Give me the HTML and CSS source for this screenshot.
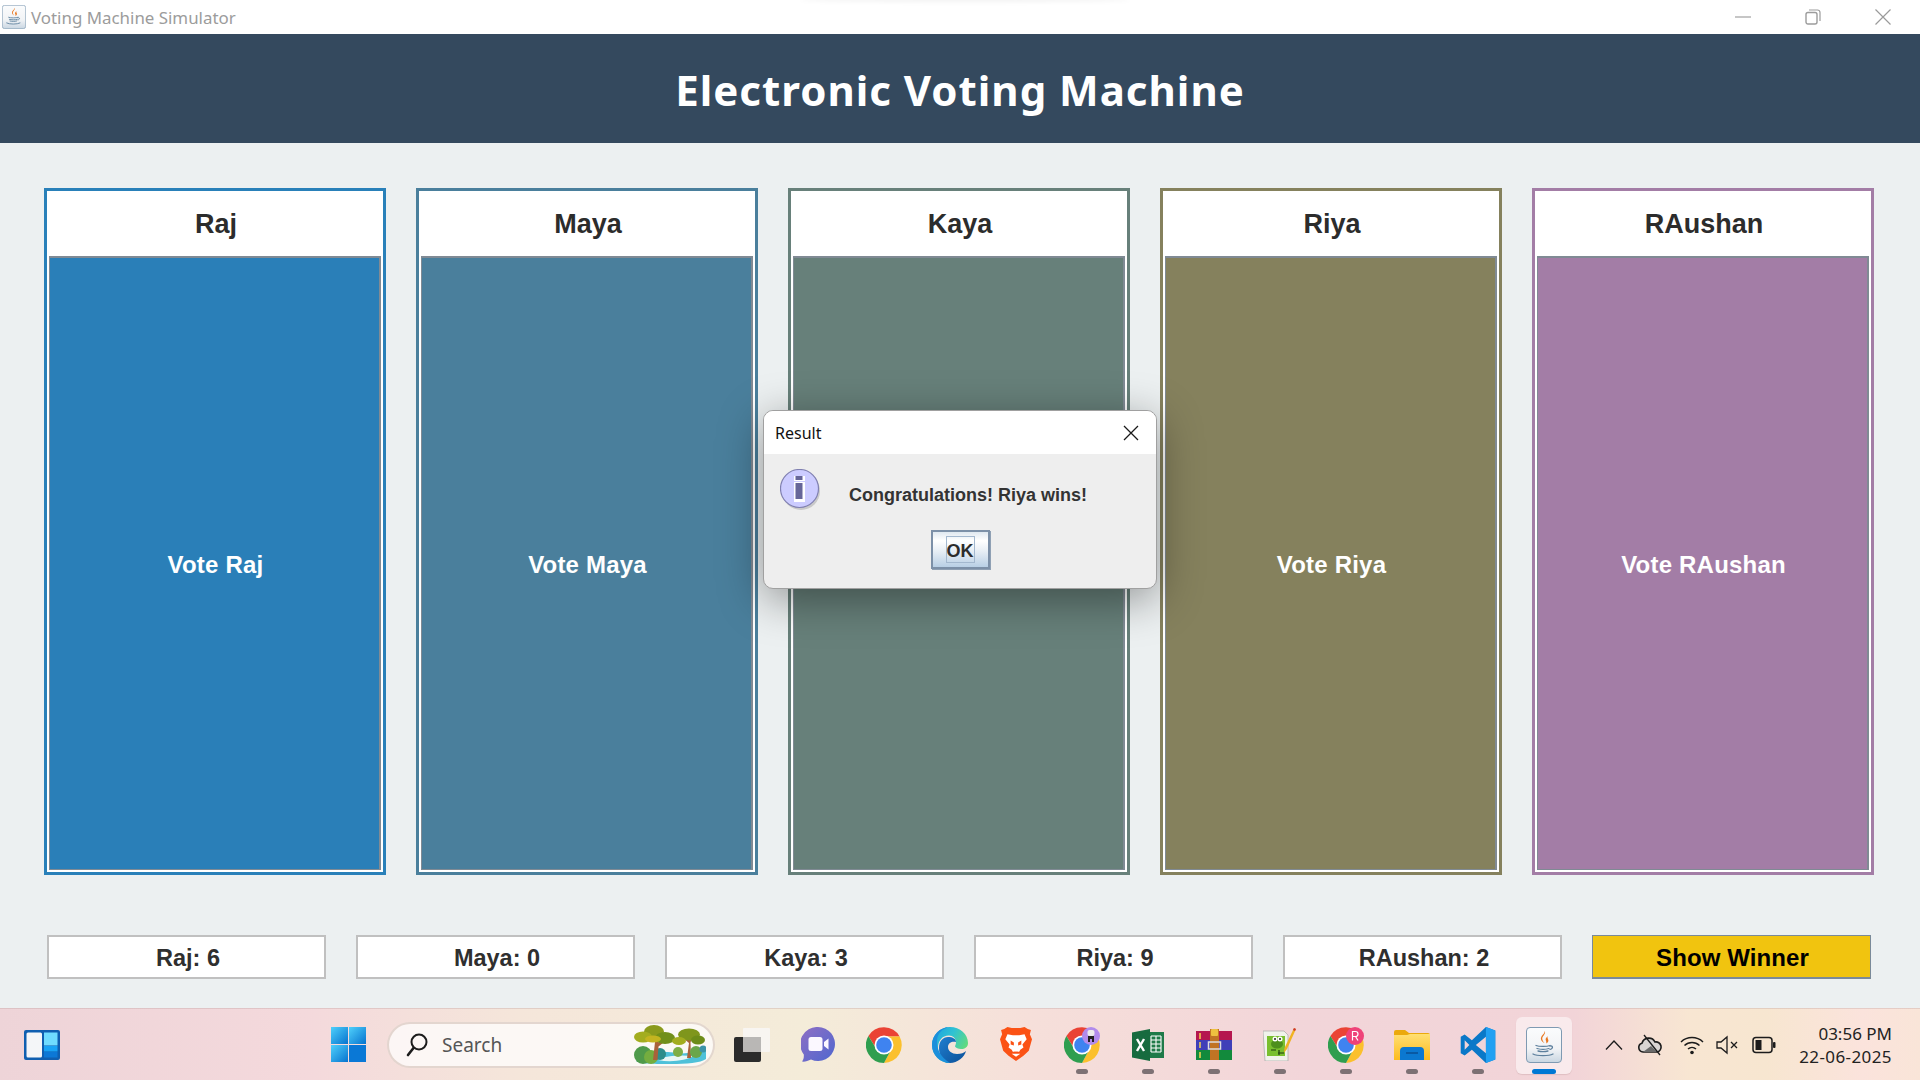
FILE: index.html
```html
<!DOCTYPE html>
<html lang="en">
<head>
<meta charset="utf-8">
<title>Voting Machine Simulator</title>
<link rel="stylesheet" href="styles.css">
</head>
<body>
<svg class="defs" aria-hidden="true">
  <defs>
    <linearGradient id="javaBg" x1="0" y1="0" x2="0" y2="1"><stop offset="0" stop-color="#fbfcfd"/><stop offset=".6" stop-color="#f2f4f6"/><stop offset="1" stop-color="#c9d6e2"/></linearGradient>
    <linearGradient id="edgeA" x1="0" y1="0" x2="1" y2=".6"><stop offset="0" stop-color="#1b9de2"/><stop offset=".5" stop-color="#2fc2d3"/><stop offset="1" stop-color="#6ade71"/></linearGradient>
    <linearGradient id="edgeB" x1="0" y1="0" x2="1" y2="1"><stop offset="0" stop-color="#1f7fd0"/><stop offset="1" stop-color="#0c4f97"/></linearGradient>
    <linearGradient id="startA" x1="0" y1="0" x2="1" y2="1"><stop offset="0" stop-color="#4fd0fb"/><stop offset="1" stop-color="#0673cf"/></linearGradient>
    <linearGradient id="meetA" x1="0" y1="0" x2="1" y2="1"><stop offset="0" stop-color="#8f6fc4"/><stop offset="1" stop-color="#4f67cf"/></linearGradient>
    <linearGradient id="folderA" x1="0" y1="0" x2="0" y2="1"><stop offset="0" stop-color="#ffdf72"/><stop offset="1" stop-color="#fdbb1d"/></linearGradient>
    <symbol id="java" viewBox="0 0 36 36">
      <rect x=".5" y=".5" width="35" height="35" rx="3.5" fill="url(#javaBg)" stroke="#7f9ab2"/>
      <path d="M18.500 4c2.500 3-3.500 5-2 9 .5 1.500 1.500 2.500 2 3-3-1.500-4.500-4-3-6.500C16.500 7.500 19 6.500 18.500 4z" fill="#e8761f"/>
      <path d="M22 9c-2 1.500-3 3-2 5 .4 1 .6 1.500 0 2.500 2-1 3-2.500 2-4.500-.5-1-.8-1.800 0-3z" fill="#e8761f"/>
      <path d="M10 18.500c3 1.200 11 1.200 14 0M11 21.500c3 1 9 1 12 0M12 24c3 .8 7 .8 10 0M24 19c3-.6 3.500 2.500 0 3.500M7 27c4 2.200 16 2.200 20 0" fill="none" stroke="#5c7f9c" stroke-width="1.300" stroke-linecap="round"/>
    </symbol>
    <symbol id="chrome" viewBox="0 0 36 36">
      <path d="M18 9.500H33.600A18 18 0 0 0 2.400 9L10.600 22.300A8.500 8.500 0 0 1 18 9.500Z" fill="#ea4335"/>
      <path d="M18 9.500H33.600A18 18 0 0 1 18 36L25.400 22.300A8.500 8.500 0 0 0 18 9.500Z" fill="#fbc02d"/>
      <path d="M10.600 22.300L2.400 9A18 18 0 0 0 18 36L25.400 22.300A8.500 8.500 0 0 1 10.600 22.300Z" fill="#2f9e4f"/>
      <circle cx="18" cy="18" r="9.500" fill="#fff"/>
      <circle cx="18" cy="18" r="7.800" fill="#3f83f0"/>
    </symbol>
  </defs>
</svg>

<div class="titlebar">
  <svg class="title-icon" viewBox="0 0 36 36"><use href="#java"/></svg>
  <span class="title-text">Voting Machine Simulator</span>
  <div class="window-controls">
    <span class="wc"><svg width="16" height="16" viewBox="0 0 16 16"><path d="M0 8h16" stroke="#a0a0a0" stroke-width="1.200"/></svg></span>
    <span class="wc"><svg width="16" height="16" viewBox="0 0 16 16"><rect x="1" y="3.500" width="11" height="11.500" rx="2" fill="none" stroke="#9c9c9c" stroke-width="1.400"/><path d="M4 1h8.500A2.500 2.500 0 0 1 15 3.500V12" fill="none" stroke="#9c9c9c" stroke-width="1.200"/></svg></span>
    <span class="wc"><svg width="16" height="16" viewBox="0 0 16 16"><path d="M.5.500l15 15M15.500.500l-15 15" stroke="#9a9a9a" stroke-width="1.200"/></svg></span>
  </div>
</div>

<header class="app-header"><h1>Electronic Voting Machine</h1></header>

<main class="board">
  <section class="cards">
    <article class="card c-raj"><h2>Raj</h2><button class="vote">Vote Raj</button></article>
    <article class="card c-maya"><h2>Maya</h2><button class="vote">Vote Maya</button></article>
    <article class="card c-kaya"><h2>Kaya</h2><button class="vote" aria-label="Vote Kaya"></button></article>
    <article class="card c-riya"><h2>Riya</h2><button class="vote">Vote Riya</button></article>
    <article class="card c-raushan"><h2>RAushan</h2><button class="vote">Vote RAushan</button></article>
  </section>
  <section class="stats">
    <div class="stat">Raj: 6</div>
    <div class="stat">Maya: 0</div>
    <div class="stat">Kaya: 3</div>
    <div class="stat">Riya: 9</div>
    <div class="stat">RAushan: 2</div>
    <button class="winner">Show Winner</button>
  </section>
</main>

<footer class="taskbar">
  <svg class="widgets" width="36" height="30" viewBox="0 0 36 30">
    <rect width="36" height="30" rx="2" fill="#0f5fb0"/>
    <rect x="2.500" y="2.500" width="15.500" height="25" rx="1.500" fill="#f4f6f8"/>
    <rect x="20" y="2.500" width="13.500" height="13" fill="#6fdcff"/>
    <rect x="20" y="16" width="13.500" height="5.500" fill="#18a3f5"/>
    <rect x="20" y="22" width="13.500" height="5.500" fill="#0c78d6"/>
  </svg>
  <div class="slot start-slot">
    <svg width="35" height="35" viewBox="0 0 35 35">
      <rect width="17" height="17" fill="url(#startA)"/><rect x="18" width="17" height="17" fill="url(#startA)"/>
      <rect y="18" width="17" height="17" fill="url(#startA)"/><rect x="18" y="18" width="17" height="17" fill="#0a78d6"/>
    </svg>
  </div>
  <div class="search">
    <svg width="22" height="24" viewBox="0 0 22 24"><circle cx="13" cy="9" r="7.500" fill="none" stroke="#1c1c1c" stroke-width="2"/><path d="M7.500 15L2 22" stroke="#1c1c1c" stroke-width="2.600" stroke-linecap="round"/></svg>
    <span class="search-label">Search</span>
    <svg class="search-art" width="72" height="40" viewBox="0 0 72 40">
      <path d="M2 36c12-10 30-10 40-8s20-2 30-4v10c-5 4-20 5-35 5S6 39 2 36z" fill="#4fc1d9"/>
      <path d="M24 35c8-5 24-5 36-4-8 4-22 7-36 4z" fill="#e9f7f5"/>
      <circle cx="9" cy="30" r="9" fill="#4f9a4a"/><circle cx="17" cy="32" r="7" fill="#74ad3f"/><circle cx="26" cy="29" r="6" fill="#2d8d8a"/>
      <path d="M19 35l2-18-8-7 2-1.500 7 6 3-8 2.500 1-3 10 9-6 1 2-10 8-1 13.500z" fill="#a9613a"/>
      <ellipse cx="20" cy="6.500" rx="10" ry="6.500" fill="#8a9a1c"/><ellipse cx="9" cy="12" rx="9" ry="5.500" fill="#a3ad1f"/><ellipse cx="31" cy="13" rx="10" ry="6" fill="#718f1a"/><ellipse cx="19" cy="14" rx="8" ry="3.500" fill="#c3b420"/>
      <path d="M53 33l2-15-6-5 1.500-1 4.500 3 3-5 2 1-3.500 6 .5 16z" fill="#a9613a"/>
      <ellipse cx="55" cy="9.500" rx="11" ry="6" fill="#7f961c"/><ellipse cx="45" cy="16" rx="7" ry="4" fill="#a3ad1f"/><ellipse cx="64" cy="15" rx="7" ry="4.500" fill="#6d8c19"/>
      <circle cx="44" cy="27" r="5" fill="#7dae45"/><circle cx="62" cy="27" r="6" fill="#6aa64a"/><circle cx="69" cy="24" r="3.500" fill="#3b93a8"/>
    </svg>
  </div>
  <div class="slots">
    <div class="slot">
      <svg width="36" height="34" viewBox="0 0 36 34"><rect y="9" width="27" height="25" rx="2" fill="#2b2b2b"/><rect x="9" width="27" height="24" rx="1" fill="#f7f5f3" fill-opacity=".92"/><rect x="9" y="9" width="18" height="15" fill="#b9b7b5"/></svg>
    </div>
    <div class="slot">
      <svg width="34" height="36" viewBox="0 0 34 36"><path d="M17 0a17 17 0 1 1-7 32.500C7 34 3.500 35 1 34.500c1.500-2 2-4 1.800-7A17 17 0 0 1 17 0z" fill="url(#meetA)"/><rect x="7.500" y="10" width="14" height="14" rx="2.500" fill="#fbf8ff"/><path d="M23 15l4.500-3.500v11L23 19z" fill="#fbf8ff"/></svg>
    </div>
    <div class="slot"><svg width="36" height="36"><use href="#chrome"/></svg></div>
    <div class="slot">
      <svg width="36" height="36" viewBox="0 0 36 36">
        <path d="M18 0c10 0 18 7 18 16 0 4-3 6-7 6-3 0-5-1-6-2.500 0-1 1-2 1-4 0-4-3-7-7-7C10 8.500 6 14 6 21c0 7 5 13 12 15C8 36 0 28 0 18 0 8 8 0 18 0z" fill="url(#edgeA)"/>
        <path d="M7 21C7 14 11 10 16 10c5 0 8 2 8 5-3-1-8 0-8 5 0 4 4 7 9 7 4 0 7-1 9-3-1.500 6-8.500 12-16 12C10 36 7 28 7 21z" fill="url(#edgeB)"/>
        <path d="M0 18C0 8 8 0 18 0 10 1 5 7 5 14c-.5 7 3 16 13 22C8 36 0 28 0 18z" fill="#1c8fdb"/>
      </svg>
    </div>
    <div class="slot">
      <svg width="32" height="37" viewBox="0 0 30 36" preserveAspectRatio="none">
        <path d="M7 1l4 1h8l4-1 3 2 3 1-1 4 2 5-3 11-5 5-7 5-7-5-5-5L0 13l2-5-1-4 3-1z" fill="#fb5215"/>
        <path d="M7 8l5 1h6l5-1 2 5-4 5 1 3-3 2-1 2h-6l-1-2-3-2 1-3-4-5z" fill="#fff"/>
        <path d="M10 14l3 2v3l-3-1zM20 14l-3 2v3l3-1zM13 25h4l-2 3z" fill="#fb5215"/>
        <path d="M11 27h8l-4 3z" fill="#fff"/>
      </svg>
    </div>
    <div class="slot has-dot">
      <svg width="36" height="36"><use href="#chrome"/></svg>
      <svg class="badge" width="18" height="18" viewBox="0 0 18 18"><circle cx="9" cy="9" r="9" fill="#b18bec"/><rect x="5.500" y="3" width="7" height="6" rx="2" fill="#ececec"/><path d="M6 9h6v6h-2v-3H8v3H6z" fill="#222"/></svg>
    </div>
    <div class="slot has-dot">
      <svg width="32" height="32" viewBox="0 0 32 32">
        <rect x="12" y="3" width="20" height="26" fill="#1f7a49"/>
        <path d="M19 7h10M19 11h10M19 15h10M19 19h10M19 23h10M19 7v16M24 7v16M29 7v16" stroke="#fff" stroke-width="1.100"/>
        <path d="M0 3.500L18 0v32L0 28.500z" fill="#176b3f"/>
        <path d="M5 10l7 12M12 10L5 22" stroke="#fff" stroke-width="2.400"/>
      </svg>
    </div>
    <div class="slot has-dot">
      <svg width="36" height="32" viewBox="0 0 36 32">
        <rect y="2" width="36" height="9" fill="#b5174f"/><rect y="11" width="36" height="10" fill="#3f3fb8"/><rect y="21" width="36" height="10" fill="#128a3c"/>
        <path d="M4 4v6M4 13v6M4 23v6" stroke="#f5d44d" stroke-width="1.500"/>
        <rect x="14" y="0" width="9" height="31" fill="#c17424"/>
        <rect x="15" y="0" width="7" height="7" rx="1" fill="#eec13f"/>
        <rect x="12.500" y="13" width="12" height="7" fill="none" stroke="#ddd" stroke-width="1.500"/>
      </svg>
    </div>
    <div class="slot has-dot">
      <svg width="34" height="33" viewBox="0 0 34 33">
        <path d="M0 3h21l4 4v26H2z" fill="#f0f2ea" stroke="#a6a6a6" stroke-width=".7"/>
        <rect x="4" y="8" width="18" height="20" fill="#79bf2e"/>
        <ellipse cx="14" cy="16" rx="6" ry="4.500" fill="#4d8f1c"/><circle cx="12" cy="11" r="2.500" fill="#fff"/><circle cx="17" cy="11" r="2.500" fill="#fff"/><circle cx="12" cy="11" r="1" fill="#222"/><circle cx="17" cy="11" r="1" fill="#222"/>
        <path d="M8 22h5M15 25h6M16 22v5" stroke="#1f3f0f" stroke-width="1.200"/>
        <path d="M33 1L24 21l-3 4 .5-5L31 0z" fill="#f0b323"/><path d="M33 1l-2-1-1 2 2 1z" fill="#c33"/>
      </svg>
    </div>
    <div class="slot has-dot">
      <svg width="36" height="36"><use href="#chrome"/></svg>
      <svg class="badge" width="18" height="18" viewBox="0 0 18 18"><circle cx="9" cy="9" r="9" fill="#ef4279"/><path d="M6.500 13.500v-9h3a2.500 2.500 0 0 1 0 5h-3M9.500 9.500l2.500 4" fill="none" stroke="#fff" stroke-width="1.200"/></svg>
    </div>
    <div class="slot has-dot">
      <svg width="36" height="30" viewBox="0 0 36 30">
        <path d="M0 2a2 2 0 0 1 2-2h9l4 3h19a2 2 0 0 1 2 2v5H0z" fill="#eba90b"/>
        <path d="M0 5h13l3-1h20v26H0z" fill="url(#folderA)"/>
        <path d="M6 30V21a4 4 0 0 1 4-4h16a4 4 0 0 1 4 4v9z" fill="#0b78d0"/>
        <path d="M12 23h12" stroke="#0a4f94" stroke-width="1.500"/>
      </svg>
    </div>
    <div class="slot has-dot">
      <svg width="36" height="36" viewBox="0 0 100 100">
        <path fill-rule="evenodd" d="M72 0L33 37 13 21 2 27v46l11 6 20-16 39 37 26-10V10zM72 27L44 50l28 23zM13 37v26l13-13z" fill="#0a78c8"/>
        <path fill-rule="evenodd" d="M72 0l26 10v80l-26 10V73l0-46z" fill="#22a0f2"/>
      </svg>
    </div>
    <div class="slot has-dot active"><svg width="36" height="36"><use href="#java"/></svg></div>
  </div>
  <div class="tray">
    <span class="tray-item"><svg width="18" height="10" viewBox="0 0 18 10"><path d="M1 9.500L9 1l8 8.500" fill="none" stroke="#1c1c1c" stroke-width="1.300"/></svg></span>
    <span class="tray-item"><svg width="26" height="22" viewBox="0 0 26 22"><path d="M6 18a4.500 4.500 0 0 1-1-8.800A7 7 0 0 1 18 8a5 5 0 0 1 2 10z" fill="#d9d4d2" stroke="#1c1c1c" stroke-width="1.600"/><path d="M6 18l8-6 6 6z" fill="#6a6a6a"/><path d="M7 1l16 20" stroke="#1c1c1c" stroke-width="1.300"/></svg></span>
    <span class="tray-item tray-wifi"><svg width="24" height="20" viewBox="0 0 24 20"><path d="M1 7a16 16 0 0 1 22 0M4.500 10.500a11 11 0 0 1 15 0M8 14a6 6 0 0 1 8 0" fill="none" stroke="#1c1c1c" stroke-width="1.500"/><circle cx="12" cy="17.500" r="1.800" fill="#1c1c1c"/></svg></span>
    <span class="tray-item"><svg width="24" height="20" viewBox="0 0 24 20"><path d="M1 7h4l6-5v16l-6-5H1z" fill="none" stroke="#1c1c1c" stroke-width="1.300"/><path d="M15 7l6 6M21 7l-6 6" stroke="#1c1c1c" stroke-width="1.300"/></svg></span>
    <span class="tray-item"><svg width="24" height="18" viewBox="0 0 24 18"><rect x="1" y="1.500" width="19" height="15" rx="3" fill="none" stroke="#1c1c1c" stroke-width="1.500"/><rect x="3.500" y="4" width="6" height="10" fill="#1c1c1c"/><rect x="21" y="6" width="2.500" height="6" rx="1" fill="#1c1c1c"/></svg></span>
  </div>
  <div class="clock"><span>03:56 PM</span><span class="clock-date">22-06-2025</span></div>
</footer>

<div class="dialog">
  <div class="dialog-title">
    <span>Result</span>
    <svg width="16" height="16" viewBox="0 0 16 16"><path d="M1 1l14 14M15 1L1 15" stroke="#1a1a1a" stroke-width="1.300"/></svg>
  </div>
  <div class="dialog-body">
    <svg class="info" width="44" height="46" viewBox="0 0 44 46">
      <circle cx="21" cy="22" r="19" fill="#b9b9b9" opacity=".7"/>
      <circle cx="19.500" cy="19.500" r="19" fill="#ccccff" stroke="#8080b0" stroke-width="1.200"/>
      <rect x="14" y="7" width="11" height="5" fill="#fff"/><rect x="15.500" y="7" width="7" height="4" fill="#666699"/>
      <rect x="14" y="13" width="11" height="20" fill="#fff"/><rect x="15.500" y="14" width="7" height="16" fill="#666699"/>
    </svg>
    <p class="message">Congratulations! Riya wins!</p>
  </div>
  <div class="dialog-actions"><button class="ok"><span class="ok-focus">OK</span></button></div>
</div>
</body>
</html>
```

FILE: styles.css
```css
* { box-sizing: border-box; }
html, body { margin: 0; padding: 0; }
body {
  width: 1920px;
  height: 1080px;
  overflow: hidden;
  display: flex;
  flex-direction: column;
  position: relative;
  font-family: "Liberation Sans", Arial, sans-serif;
  background: #ecf0f1;
}
button { font-family: inherit; cursor: pointer; margin: 0; padding: 0; }
.defs { position: absolute; width: 0; height: 0; }

/* title bar */
.titlebar {
  height: 34px;
  flex: none;
  display: flex;
  align-items: center;
  background: #fff;
  padding: 0 2px;
  position: relative;
}
.titlebar::after {
  content: "";
  position: absolute;
  left: 800px;
  top: -3px;
  width: 330px;
  height: 5px;
  border-radius: 50%;
  background: rgba(0, 0, 0, .05);
  filter: blur(2px);
}
.title-icon { width: 24px; height: 24px; flex: none; }
.title-text {
  margin-left: 5px;
  font: 16.900px "Noto Sans", sans-serif;
  color: #9c9c9c;
}
.window-controls { margin-left: auto; display: flex; }
.wc { width: 70px; display: flex; justify-content: center; }

/* header */
.app-header {
  height: 109px;
  flex: none;
  background: #34495e;
  display: flex;
  align-items: center;
  justify-content: center;
}
.app-header h1 {
  margin: 0;
  font: 700 42px "Noto Sans", sans-serif;
  letter-spacing: 1px;
  color: #fff;
  position: relative;
  top: 1px;
}

/* board */
.board { flex: 1; padding-top: 45px; }
.cards {
  display: grid;
  grid-template-columns: repeat(5, 342px);
  gap: 30px;
  padding-left: 44px;
}
.card {
  height: 687px;
  display: flex;
  flex-direction: column;
  background: #fff;
  border: 3px solid;
  padding: 0 2px 2px;
}
.card h2 {
  margin: 0;
  height: 65px;
  flex: none;
  display: flex;
  align-items: center;
  justify-content: center;
  padding: 2px 0 0 2px;
  font-size: 27px;
  font-weight: 700;
  color: #2c2c2c;
}
.vote {
  flex: 1;
  color: #fff;
  font-size: 24px;
  font-weight: 700;
  letter-spacing: .2px;
  padding: 2px 0 0 2px;
  border-style: solid;
  border-color: #808a94;
  border-width: 2px 2px 1px 1px;
}
.c-raj { border-color: #2980b9; }
.c-raj .vote { background: #2a7fb8; }
.c-maya { border-color: #4a7f9c; }
.c-maya .vote { background: #4a7f9c; }
.c-kaya { border-color: #67807a; }
.c-kaya .vote { background: #67807a; }
.c-riya { border-color: #85815d; }
.c-riya .vote { background: #85815d; }
.c-raushan { border-color: #a37da6; }
.c-raushan .vote { background: #a37da6; }

.stats {
  margin-top: 60px;
  display: grid;
  grid-template-columns: repeat(6, 279px);
  gap: 30px;
  padding-left: 47px;
}
.stat {
  height: 44px;
  display: flex;
  align-items: center;
  justify-content: center;
  padding: 2px 0 0 3px;
  background: #fff;
  border: 2px solid #c0c0c0;
  font-size: 23.500px;
  font-weight: 700;
  color: #2f2f2f;
}
.winner {
  height: 44px;
  padding: 2px 0 0 2px;
  background: #f1c40f;
  border: 1px solid #7a8a99;
  box-shadow: inset 0 -1px 0 #7a8a99;
  font-size: 24px;
  font-weight: 700;
  letter-spacing: .1px;
  color: #000;
}

/* taskbar */
.taskbar {
  height: 72px;
  flex: none;
  display: flex;
  align-items: center;
  padding-left: 24px;
  border-top: 1px solid rgba(190, 160, 160, .35);
  background: linear-gradient(90deg, #eed4d8 0%, #f4d9dc 16%, #f5e6da 27%, #f4ecd9 42%, #f6dfda 54%, #f2d5d9 68%, #f2d4d8 82%, #f8e6d2 88%, #f7e6d0 92%, #fbe3dc 97%, #f9e5d8 100%);
}
.widgets { flex: none; }
.slot {
  width: 66px;
  height: 71px;
  flex: none;
  display: flex;
  align-items: center;
  justify-content: center;
  position: relative;
}
.start-slot { margin-left: 255px; }
.search {
  width: 328px;
  height: 46px;
  flex: none;
  margin-left: 6px;
  padding: 0 7px 0 17px;
  display: flex;
  align-items: center;
  border-radius: 23px;
  background: rgba(255, 255, 255, .72);
  border: 2px solid rgba(205, 185, 175, .55);
}
.search-label {
  margin-left: 14px;
  font: 19px "Noto Sans", sans-serif;
  color: #555;
}
.search-art { margin-left: auto; }
.slots { display: flex; margin-left: 4px; }
.has-dot::after {
  content: "";
  position: absolute;
  left: 27px;
  bottom: 6px;
  width: 12px;
  height: 5px;
  border-radius: 3px;
  background: #7d7174;
}
.active::before {
  content: "";
  position: absolute;
  inset: 8px 5px 6px;
  border-radius: 6px;
  background: rgba(255, 255, 255, .5);
  box-shadow: 0 1px 1px rgba(150, 110, 110, .2);
}
.active svg { position: relative; }
.active::after {
  left: 21px;
  width: 24px;
  background: #0078d4;
}
.badge { position: absolute; top: 18px; left: 33px; }
.tray { display: flex; margin-left: 19px; }
.tray-item {
  width: 36px;
  display: flex;
  align-items: center;
  justify-content: center;
}
.tray-wifi { margin-left: 6px; }
.clock {
  margin-left: auto;
  padding-right: 28px;
  display: flex;
  flex-direction: column;
  align-items: flex-end;
  font: 17px/23px "Noto Sans", sans-serif;
  color: #222;
}
.clock-date { letter-spacing: .4px; }

/* dialog */
.dialog {
  position: absolute;
  left: 763px;
  top: 410px;
  width: 394px;
  height: 179px;
  border: 1px solid #a0a0a0;
  border-radius: 10px;
  background: #eeeeee;
  box-shadow: 0 10px 45px rgba(0, 0, 0, .4);
}
.dialog-title {
  height: 43px;
  padding: 0 17px 0 11px;
  display: flex;
  align-items: center;
  justify-content: space-between;
  background: #fff;
  border-radius: 9px 9px 0 0;
  font: 16px "Noto Sans", sans-serif;
  color: #111;
}
.dialog-body {
  height: 76px;
  display: flex;
  align-items: flex-start;
  padding: 15px 0 0 16px;
}
.info { flex: none; }
.message {
  margin: 16px 0 0 25px;
  font-size: 18px;
  font-weight: 700;
  color: #333;
}
.dialog-actions { display: flex; justify-content: center; }
.ok {
  width: 59px;
  height: 39px;
  display: flex;
  align-items: center;
  justify-content: center;
  background: linear-gradient(180deg, #dfe8f0 0%, #fff 25%, #e7eef5 55%, #b8cfe5 100%);
  border: 2px solid #7c90a8;
  box-shadow: 1px 1px 0 #8fa0b4;
}
.ok-focus {
  width: 29px;
  height: 27px;
  padding-top: 3px;
  display: flex;
  align-items: center;
  justify-content: center;
  border: 1px solid #a3b8cf;
  font-size: 18px;
  font-weight: 700;
  color: #2c2c2c;
}
```
